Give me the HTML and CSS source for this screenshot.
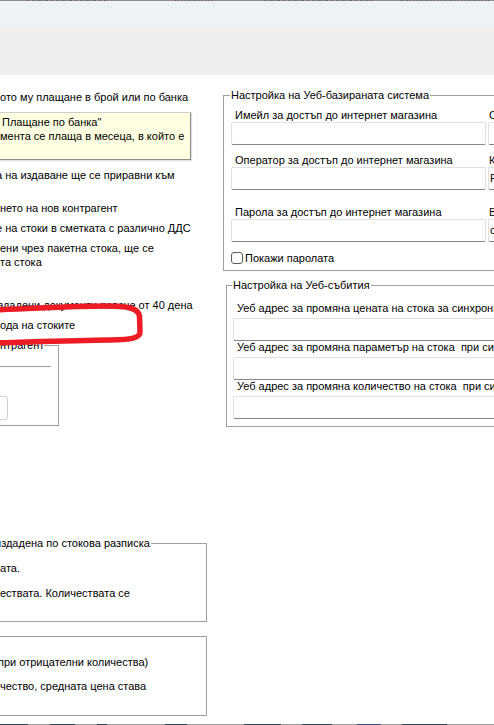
FILE: index.html
```html
<!DOCTYPE html>
<html lang="bg">
<head>
<meta charset="utf-8">
<title>Настройки</title>
<link rel="stylesheet" href="styles.css">
</head>
<body>
<div class="screen">
  <div class="edge-top"><span class="n n1"></span><span class="n n2"></span><span class="n n3"></span><span class="n n4"></span></div>
  <div class="ribbon"></div>
  <div class="toolbar"></div>
  <div class="content">
    <div class="left">
      <div class="row r1">ото му плащане в брой или по банка</div>
      <div class="tooltip">
        <div class="tip-line tl1">Плащане по банка"</div>
        <div class="tip-line">мента се плаща в месеца, в който е</div>
      </div>
      <div class="row r2 cut">а на издаване ще се приравни към</div>
      <div class="row r3">нето на нов контрагент</div>
      <div class="row cut">е на стоки в сметката с различно ДДС</div>
      <div class="row2"><div>ени чрез пакетна стока, ще се</div><div>та стока</div></div>
      <div class="row r6">издадени документи повече от 40 дена</div>
      <div class="row">ода на стоките</div>
      <fieldset class="lbox">
        <legend>нтрагент</legend>
        <div class="lbox-field"></div>
        <div class="lbox-btn"></div>
      </fieldset>
      <fieldset class="lgroup g-receipt">
        <legend><span class="cutl">издадена по стокова разписка</span></legend>
        <div class="gline">ата.</div>
        <div class="gline second">ествата. Количествата се</div>
      </fieldset>
      <fieldset class="lgroup g-neg">
        <div class="gline cut2">при отрицателни количества)</div>
        <div class="gline second2">чество, средната цена става</div>
      </fieldset>
      <svg class="marker" width="160" height="55" viewBox="-10 295 160 55" aria-hidden="true">
        <path d="M -8 310 C 30 309 70 306 105 306 C 128 306 138 308 139.5 316 L 140 332 C 140 338 132 339.5 110 340 C 70 340.5 30 342 -8 343" fill="none" stroke="#ed1c24" stroke-width="5.5" stroke-linecap="round" stroke-linejoin="round"/>
      </svg>
    </div>
    <div class="right">
      <fieldset class="web">
        <legend>Настройка на Уеб-базираната система</legend>
        <div class="grid">
          <div class="field"><div class="lbl">Имейл за достъп до интернет магазина</div><div class="inp"></div></div>
          <div class="field"><div class="lbl rc">Сайт на магазина</div><div class="inp"></div></div>
          <div class="field f2"><div class="lbl">Оператор за достъп до интернет магазина</div><div class="inp"></div></div>
          <div class="field f2"><div class="lbl rc">Код на оператор</div><div class="inp">Р</div></div>
          <div class="field f3"><div class="lbl">Парола за достъп до интернет магазина</div><div class="inp"></div></div>
          <div class="field f3"><div class="lbl rc">Вид на връзката</div><div class="inp">с</div></div>
        </div>
        <div class="chk-row"><span class="box"></span><span>Покажи паролата</span></div>
      </fieldset>
      <fieldset class="events">
        <legend>Настройка на Уеб-събития</legend>
        <div class="efield"><div class="lbl">Уеб адрес за промяна цената на стока за синхронизация</div><div class="inp"></div></div>
        <div class="efield"><div class="lbl">Уеб адрес за промяна параметър на стока&nbsp; при синхронизация</div><div class="inp"></div></div>
        <div class="efield"><div class="lbl">Уеб адрес за промяна количество на стока&nbsp; при синхронизация</div><div class="inp"></div></div>
      </fieldset>
    </div>
  </div>
  <div class="edge-bottom">
    <span class="t" style="width:28px"></span><span class="g" style="width:22px"></span>
    <span class="t" style="width:25px"></span><span class="g" style="width:22px"></span>
    <span class="t" style="width:10px"></span><span class="g" style="width:58px"></span>
    <span class="t" style="width:22px"></span><span class="g" style="width:57px"></span>
    <span class="t" style="width:37px"></span><span class="g" style="width:21px"></span>
    <span class="t" style="width:30px"></span><span class="g" style="width:25px"></span>
    <span class="b" style="width:24px"></span><span class="g" style="width:21px"></span>
    <span class="t" style="width:45px"></span>
  </div>
</div>
</body>
</html>
```

FILE: styles.css
```css
* { box-sizing: border-box; }
html, body { margin: 0; padding: 0; }
body {
  width: 494px;
  height: 725px;
  overflow: hidden;
  background: #ffffff;
  font-family: "Liberation Sans", Arial, sans-serif;
  font-size: 11px;
  color: #000;
}
.screen {
  width: 494px;
  height: 725px;
  overflow: hidden;
  display: flex;
  flex-direction: column;
}
.edge-top {
  flex: none;
  height: 1px;
  background: #8e8e8e;
  display: flex;
}
.edge-top .n {
  height: 1px;
  background: repeating-linear-gradient(90deg, #6b4a66 0 1px, #8a8a8a 1px 3px, #4d5f7a 3px 4px, #9a9a9a 4px 6px);
}
.edge-top .n1 { margin-left: 26px; width: 84px; }
.edge-top .n2 { margin-left: 65px; width: 37px; }
.edge-top .n3 { margin-left: 52px; width: 110px; }
.edge-top .n4 { margin-left: 27px; width: 88px; }
.ribbon { flex: none; height: 25px; background: #edf2f7; }
.toolbar { flex: none; height: 49px; background: #eeeeee; }
.content {
  flex: none;
  height: 649px;
  display: flex;
  overflow: hidden;
  background: #fff;
}
.edge-bottom {
  flex: none;
  height: 1px;
  display: flex;
  background: #9b9b9b;
}
.edge-bottom span { height: 1px; flex: none; }
.edge-bottom .t { background: #2e4656; }
.edge-bottom .g { background: #9b9b9b; }
.edge-bottom .b { background: #3c4f86; }

/* left column */
.left {
  flex: none;
  width: 223px;
  position: relative;
  display: flex;
  flex-direction: column;
}
.row {
  height: 20px;
  line-height: 20px;
  white-space: nowrap;
}
.row.cut { text-indent: -4px; }
.r1 { margin-top: 12px; }
.tooltip {
  margin-top: 5px;
  margin-left: -10px;
  width: 201px;
  height: 48px;
  background: #ffffe1;
  border: 1px solid #cdcdcd;
  border-right-color: #8c8c8c;
  border-bottom-color: #8c8c8c;
  box-shadow: 1px 1px 1px rgba(0, 0, 0, 0.12);
  padding: 2px 0 0 9px;
  white-space: nowrap;
  overflow: hidden;
}
.tip-line { line-height: 14px; }
.tl1 { text-indent: 2px; }
.r2 { margin-top: 5px; }
.r3 { margin-top: 13px; }
.row2 {
  margin-top: 3px;
  line-height: 14px;
  white-space: nowrap;
}
.r6 { margin-top: 26px; text-indent: -8px; }

fieldset {
  margin: 0;
  padding: 0;
  border: 1px solid #a0a0a0;
  min-width: 0;
}
legend {
  padding: 0 1px;
  line-height: 13px;
  white-space: nowrap;
}
.lbox {
  margin-top: 3px;
  margin-left: -10px;
  width: 69px;
  padding: 0 0 5px 0;
}
.lbox legend { margin-left: 9px; padding: 0; line-height: 14px; }
.lbox-field {
  margin-left: 9px;
  width: 51px;
  height: 15px;
  border-bottom: 1px solid #a0a0a0;
}
.lbox-btn {
  margin-top: 29px;
  width: 17px;
  height: 24px;
  border: 1px solid #d0d0d0;
  border-radius: 3px;
  background: #fdfdfd;
}
.lgroup {
  margin-left: -10px;
  width: 217px;
}
.lgroup legend { line-height: 14px; padding: 0 1px 0 0; }
.cutl { margin-left: -5px; }
.g-receipt {
  margin-top: 110px;
  padding: 8px 0 18px 9px;
}
.g-neg {
  margin-top: 14px;
  padding: 15px 0 19px 9px;
}
.gline {
  height: 20px;
  line-height: 20px;
  white-space: nowrap;
}
.gline.second { margin-top: 5px; }
.gline.second2 { margin-top: 4px; }
.gline.cut2 { text-indent: -2px; }
.marker {
  position: absolute;
  left: -10px;
  top: 220px;
  overflow: visible;
}

/* right column */
.right {
  flex: none;
  width: 620px;
  display: flex;
  flex-direction: column;
  align-items: flex-start;
}
.lbl {
  line-height: 13px;
  height: 13px;
  padding-left: 4px;
  white-space: nowrap;
  overflow: hidden;
}
.lbl.rc { padding-left: 1px; }
.inp {
  height: 23px;
  background: #fff;
  border: 1px solid #e0e0e0;
  border-bottom-color: #868686;
  border-radius: 2px;
  padding-left: 1px;
  line-height: 21px;
  white-space: nowrap;
  overflow: hidden;
}
.web {
  margin-top: 14px;
  width: 600px;
  padding: 7px 0 6px 7px;
}
.web legend { margin-left: -1px; }
.grid {
  display: grid;
  grid-template-columns: 255px 255px;
  column-gap: 2px;
}
.field.f2 { margin-top: 9px; }
.field.f3 { margin-top: 16px; }
.chk-row {
  margin-top: 9px;
  height: 13px;
  display: flex;
  align-items: center;
  gap: 2px;
  white-space: nowrap;
}
.box {
  flex: none;
  width: 12px;
  height: 12px;
  border: 1px solid #5c5c5c;
  border-radius: 3px;
  background: #fff;
}
.events {
  margin-top: 8px;
  margin-left: 3px;
  width: 600px;
  padding: 10px 0 7px 6px;
}
.events legend { margin-left: -1px; }
.efield .lbl { margin-bottom: 3px; }
.efield .inp { width: 400px; }
```
